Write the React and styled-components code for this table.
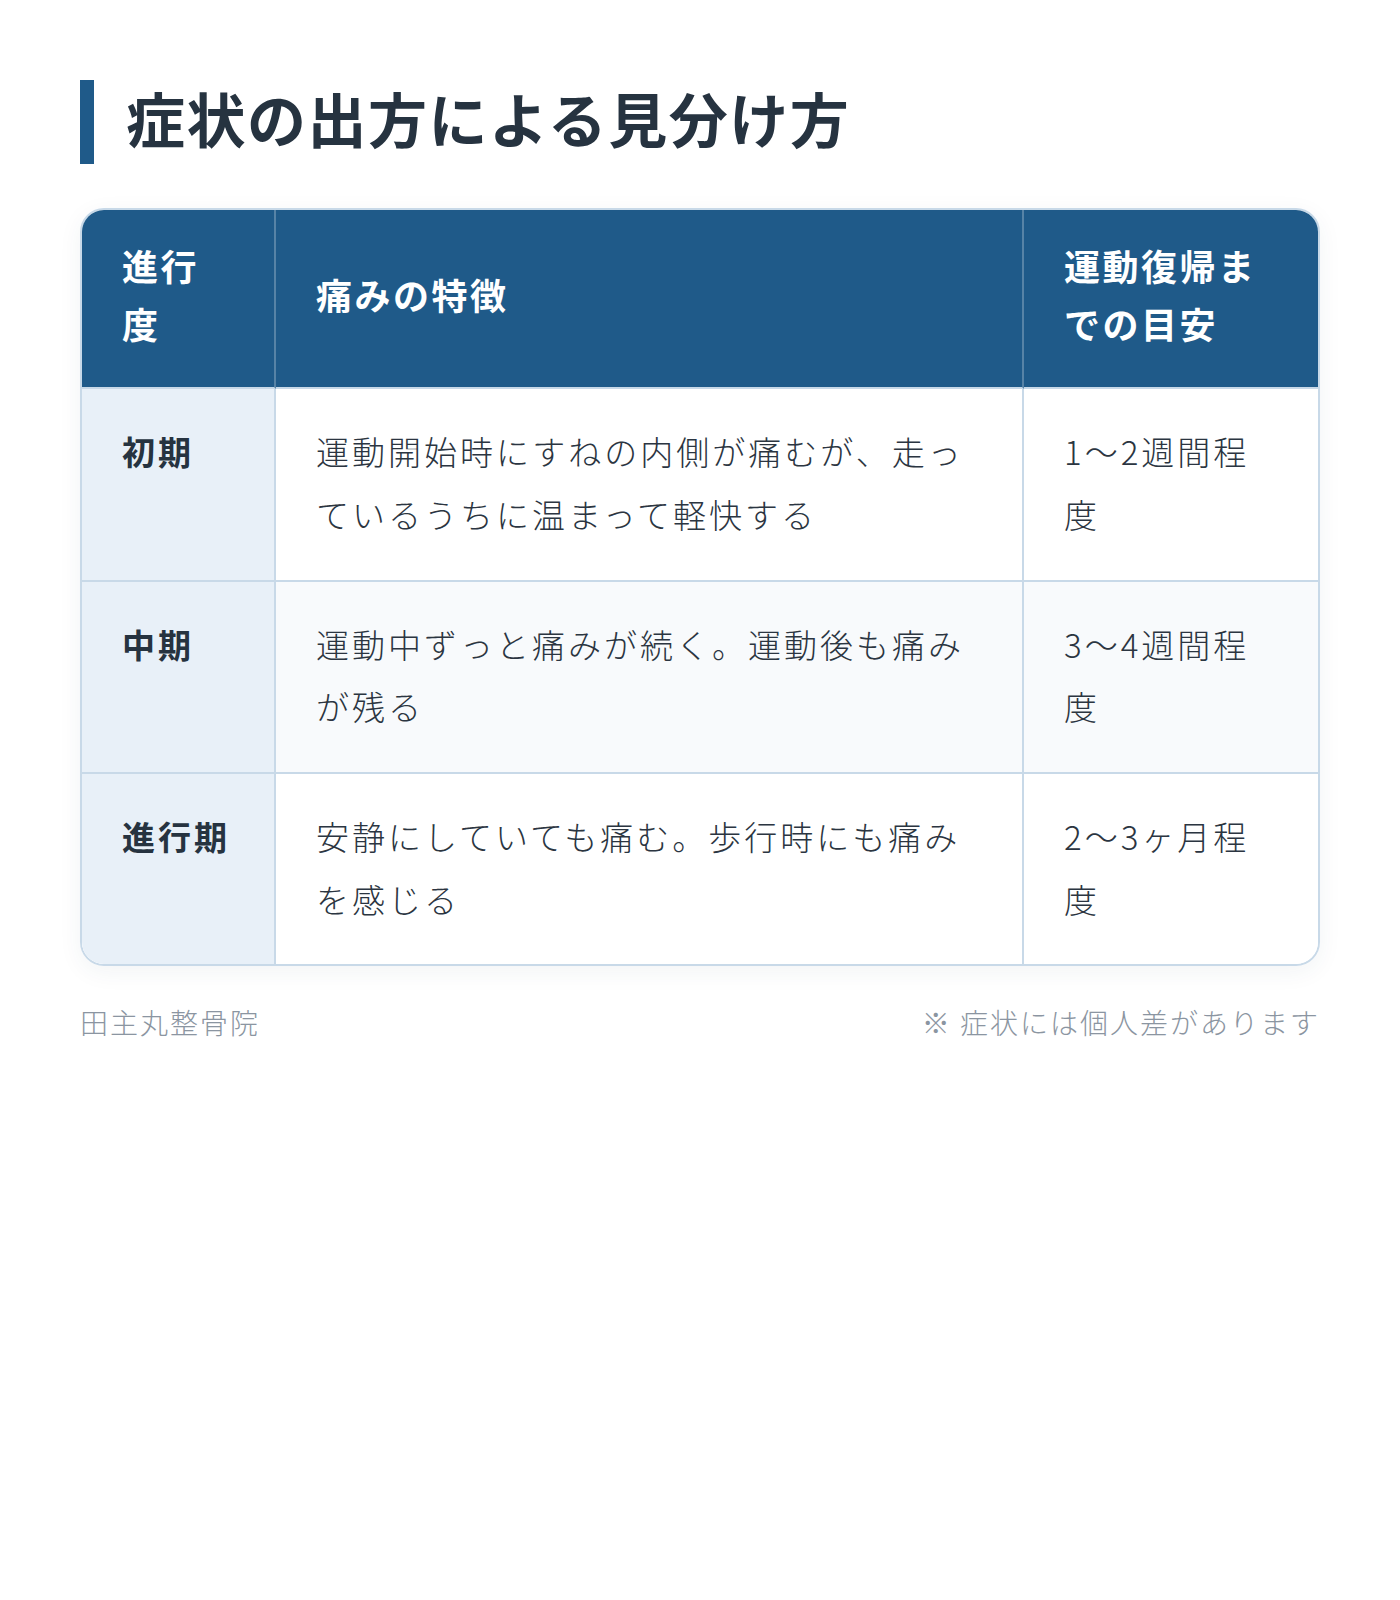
import React from "react";
import styled, { createGlobalStyle } from "styled-components";

const GlobalStyle = createGlobalStyle`
  html, body {
    margin: 0;
    padding: 0;
    background: #ffffff;
  }
  body {
    font-family: "Noto Sans CJK JP", "Noto Sans", sans-serif;
    color: #263340;
  }
`;

const Page = styled.div`
  width: 1400px;
  box-sizing: border-box;
  padding: 80px 80px 120px;
`;

const Title = styled.h2`
  margin: 0 0 44px;
  padding: 0 0 8px 32px;
  border-left: 14px solid #1f5a89;
  font-size: 59px;
  line-height: 76px;
  font-weight: 700;
  color: #263340;
  letter-spacing: 1.5px;
`;

const TableWrap = styled.div`
  border: 2px solid #c8d9e8;
  border-radius: 24px;
  overflow: hidden;
  box-shadow: 0 6px 24px rgba(30, 60, 90, 0.06);
`;

const Table = styled.table`
  width: 100%;
  border-collapse: separate;
  border-spacing: 0;
  table-layout: fixed;
`;

const HeadCell = styled.th`
  background: #1f5a89;
  color: #ffffff;
  font-size: 36px;
  font-weight: 700;
  line-height: 1.6;
  letter-spacing: 2.5px;
  text-align: left;
  vertical-align: middle;
  padding: 27px 40px 35px;
  border-bottom: 2px solid #c8d9e8;
  border-right: ${({ $last }) => ($last ? "none" : "2px solid #5783a6")};
`;

const Row = styled.tr`
  background: ${({ $alt }) => ($alt ? "#f8fafc" : "#ffffff")};
`;

const Cell = styled.td`
  font-size: 33px;
  line-height: 1.9;
  letter-spacing: 3px;
  font-weight: ${({ $stage }) => ($stage ? 700 : 300)};
  color: ${({ $stage }) => ($stage ? "#263340" : "#2b3541")};
  background: ${({ $stage }) => ($stage ? "#e8f0f8" : "transparent")};
  vertical-align: top;
  padding: 31px 40px 34px;
  border-right: ${({ $last }) => ($last ? "none" : "2px solid #c8d9e8")};
  border-bottom: ${({ $bottom }) => ($bottom ? "none" : "2px solid #c8d9e8")};
`;

const Footer = styled.div`
  display: flex;
  justify-content: space-between;
  align-items: center;
  margin-top: 34px;
  font-size: 28px;
  line-height: 1.6;
  letter-spacing: 2px;
  font-weight: 300;
  color: #8b95a1;
`;

const rows = [
  {
    stage: "初期",
    pain: "運動開始時にすねの内側が痛むが、走っているうちに温まって軽快する",
    back: "1〜2週間程度",
  },
  {
    stage: "中期",
    pain: "運動中ずっと痛みが続く。運動後も痛みが残る",
    back: "3〜4週間程度",
  },
  {
    stage: "進行期",
    pain: "安静にしていても痛む。歩行時にも痛みを感じる",
    back: "2〜3ヶ月程度",
  },
];

const App = () => {
  return (
    <>
      <GlobalStyle />
      <Page>
        <Title>症状の出方による見分け方</Title>
        <TableWrap>
          <Table>
            <colgroup>
              <col style={{ width: "194px" }} />
              <col style={{ width: "748px" }} />
              <col />
            </colgroup>
            <thead>
              <tr>
                <HeadCell>進行度</HeadCell>
                <HeadCell>痛みの特徴</HeadCell>
                <HeadCell $last>運動復帰までの目安</HeadCell>
              </tr>
            </thead>
            <tbody>
              {rows.map((row, i) => {
                const bottom = i === rows.length - 1;
                return (
                  <Row key={row.stage} $alt={i === 1}>
                    <Cell $stage $bottom={bottom}>{row.stage}</Cell>
                    <Cell $bottom={bottom}>{row.pain}</Cell>
                    <Cell $last $bottom={bottom}>{row.back}</Cell>
                  </Row>
                );
              })}
            </tbody>
          </Table>
        </TableWrap>
        <Footer>
          <span>田主丸整骨院</span>
          <span>※ 症状には個人差があります</span>
        </Footer>
      </Page>
    </>
  );
};

export default App;
